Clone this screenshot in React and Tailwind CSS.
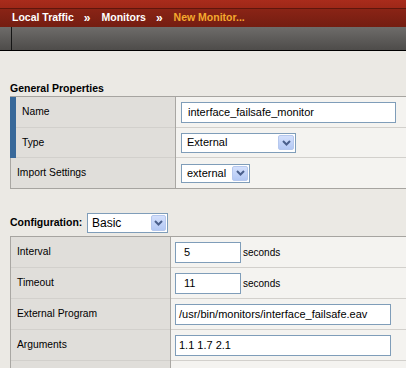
import React from "react";

function Chevron() {
  return (
    <svg width="9" height="6" viewBox="0 0 9 6">
      <polyline points="1,1 4.5,4.5 8,1" fill="none" stroke="#4a5f8c" strokeWidth="2" />
    </svg>
  );
}

function Select({ value, width, height = 20, text = "text-[11px]", pad = "pl-[5px]", arrow = "w-[16px] h-[15px]" }) {
  return (
    <div
      className={`flex items-center justify-between border border-[#7f9db9] bg-white ${text}`}
      style={{ width, height }}
    >
      <span className={pad}>{value}</span>
      <span
        className={`mr-[1px] flex items-center justify-center rounded-[2px] border border-[#b6c8ee] bg-gradient-to-b from-[#d4e0fc] to-[#b3c8f4] ${arrow}`}
      >
        <Chevron />
      </span>
    </div>
  );
}

function Field({ value, width, pad = "pl-[6px]" }) {
  return (
    <div
      className={`flex h-[21px] items-center border border-[#7f9db9] bg-white text-[11px] ${pad}`}
      style={{ width }}
    >
      {value}
    </div>
  );
}

function Row({ label, labelW, blue, h, last, valuePad, children }) {
  const sep = last ? "" : "border-b border-[#d2d0cc]";
  return (
    <div className="flex" style={{ height: h }}>
      <div className="flex border-r border-[#a9a7a3]" style={{ width: labelW }}>
        {blue ? <div className="w-[6px] bg-[#39699a]" /> : <div className="w-px bg-[#a9a7a3]" />}
        <div className={`flex flex-1 items-center bg-[#e0deda] pl-[6px] text-[10.3px] ${sep}`}>
          {label}
        </div>
      </div>
      <div className={`flex flex-1 items-center bg-[#f4f3f0] ${valuePad} ${sep}`}>{children}</div>
    </div>
  );
}

export default function App() {
  return (
    <div className="h-[368px] w-[406px] overflow-hidden bg-[#ebe9e4] font-['Liberation_Sans',Arial,sans-serif] text-black">
      {/* header */}
      <div className="h-[8px] bg-gradient-to-b from-[#a92c1c] to-[#9e2818]" />
      <div className="h-px bg-[#5e160d]" />
      <div className="flex h-[18px] items-center bg-gradient-to-b from-[#8a2416] to-[#741d11] pl-[12px] text-[10.5px] font-bold text-white">
        <span>Local Traffic</span>
        <span className="ml-[10px] text-[12px]">»</span>
        <span className="ml-[11px]">Monitors</span>
        <span className="ml-[10px] text-[12px]">»</span>
        <span className="ml-[11px] text-[#f5a92e]">New Monitor...</span>
      </div>
      <div className="flex h-[23px] bg-gradient-to-b from-[#6e6c6a] to-[#4e4c4a]">
        <div className="w-[11px]" />
        <div className="w-px bg-[#151515]" />
      </div>
      <div className="h-px bg-black" />

      {/* general properties */}
      <div className="ml-[10px] mt-[31px] h-[12px] text-[10.5px] font-bold leading-[12px]">General Properties</div>
      <div className="ml-[10px] mt-[2px] border-y border-[#a6a4a0]">
        <Row label="Name" labelW={166} blue h={31} valuePad="pl-[5px]">
          <Field value="interface_failsafe_monitor" width={215} />
        </Row>
        <Row label="Type" labelW={166} blue h={30} valuePad="pl-[5px]">
          <Select value="External" width={115} />
        </Row>
        <Row label="Import Settings" labelW={166} h={30} last valuePad="pl-[5px]">
          <Select value="external" width={69} height={19} />
        </Row>
      </div>

      {/* configuration */}
      <div className="ml-[10px] mt-[24px] flex items-center">
        <span className="w-[77px] text-[10.5px] font-bold">Configuration:</span>
        <Select value="Basic" width={81} text="text-[12px]" pad="pl-[4px]" arrow="w-[15px] h-[16px]" />
      </div>
      <div className="ml-[10px] mt-[3px] border-t border-[#a6a4a0]">
        <Row label="Interval" labelW={161} h={31} valuePad="pl-[4px]">
          <Field value="5" width={66} pad="pl-[8px]" />
          <span className="ml-[2px] text-[10px]">seconds</span>
        </Row>
        <Row label="Timeout" labelW={161} h={31} valuePad="pl-[4px]">
          <Field value="11" width={66} pad="pl-[8px]" />
          <span className="ml-[2px] text-[10px]">seconds</span>
        </Row>
        <Row label="External Program" labelW={161} h={31} valuePad="pl-[4px]">
          <Field value="/usr/bin/monitors/interface_failsafe.eav" width={216} pad="pl-[3px]" />
        </Row>
        <Row label="Arguments" labelW={161} h={31} valuePad="pl-[4px]">
          <Field value="1.1 1.7 2.1" width={216} pad="pl-[3px]" />
        </Row>
        <Row label="" labelW={161} h={31} valuePad="pl-[4px]" />
      </div>
    </div>
  );
}
